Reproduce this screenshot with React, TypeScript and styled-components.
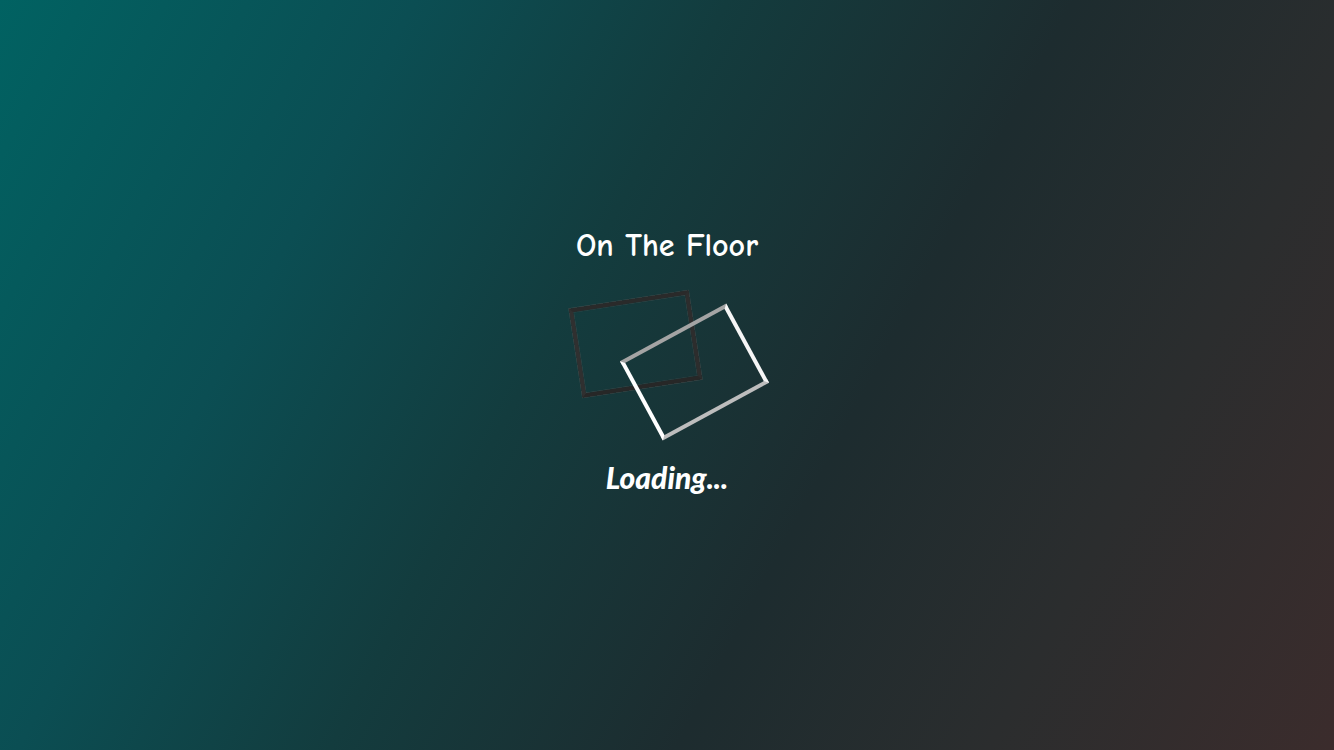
import React from "react";
import styled, { createGlobalStyle } from "styled-components";

const Global = createGlobalStyle`
  html, body { margin: 0; padding: 0; height: 100%; }
  #root { height: 100%; }
`;

const Screen = styled.div`
  width: 100vw;
  height: 100vh;
  box-sizing: border-box;
  padding-bottom: 29px;
  overflow: hidden;
  background: linear-gradient(118deg, #016262 0%, #0b4e53 24%, #133c3e 42%, #1d2c2f 62%, #2b2d2e 80%, #3b2c2c 100%);
  display: flex;
  flex-direction: column;
  align-items: center;
  justify-content: center;
  font-family: "Comic Sans MS", "Comic Neue", cursive;
  color: #fff;
`;

const Title = styled.h1`
  margin: 0 0 16px 0;
  font-size: 32px;
  font-weight: 700;
  letter-spacing: 0px;
  line-height: 36px;
`;

const Stage = styled.div`
  position: relative;
  width: 220px;
  height: 170px;
`;

const Frame = styled.div<{ $x: number; $y: number; $rot: number; $light?: boolean }>`
  position: absolute;
  left: ${(p) => p.$x - 60.5}px;
  top: ${(p) => p.$y - 45}px;
  width: 121px;
  height: 90px;
  box-sizing: border-box;
  border: 4px solid;
  border-color: ${(p) =>
    p.$light ? "#a4a4a4 #f6f6f6 #bdbdbd #ffffff" : "#2a2a2a #2d2d2d #272727 #303030"};
  box-shadow: ${(p) =>
    p.$light ? "none" : "0 0 0 0.5px rgba(90,90,90,0.6), inset 0 0 0 0.5px rgba(90,90,90,0.6)"};
  transform: rotate(${(p) => p.$rot}deg);
`;

const Loading = styled.div`
  margin-top: 11px;
  font-family: "Lato", "Noto Sans", sans-serif;
  font-style: italic;
  font-weight: 900;
  font-size: 30px;
  line-height: 32px;
  letter-spacing: 0px;
`;

export default function App() {
  return (
    <>
      <Global />
      <Screen>
        <Title>On The Floor</Title>
        <Stage>
          <Frame $x={78} $y={64} $rot={-8.8} />
          <Frame $x={137} $y={91.5} $rot={-28.5} $light />
        </Stage>
        <Loading>Loading...</Loading>
      </Screen>
    </>
  );
}
